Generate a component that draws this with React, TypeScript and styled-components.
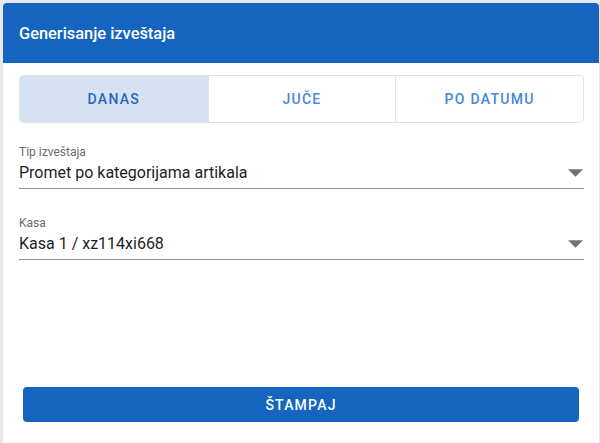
import React, { useState } from 'react'
import styled, { createGlobalStyle } from 'styled-components'

const GlobalStyle = createGlobalStyle`
  html, body {
    margin: 0;
    padding: 0;
    background: #e6e8ee;
    font-family: Roboto, 'Liberation Sans', sans-serif;
  }
  body {
    padding: 3px 1px 0 3px;
    overflow: hidden;
  }
`

const Card = styled.div`
  background: #fff;
  border-radius: 4px 4px 0 0;
  overflow: hidden;
  height: 460px;
  display: flex;
  flex-direction: column;
`

const Header = styled.div`
  background: #1565c0;
  height: 60px;
  display: flex;
  align-items: center;
  padding: 0 16px;
  color: #fff;
  font-size: 16.4px;
  font-weight: 500;
`

const Body = styled.div`
  padding: 12px 15px 0 16px;
  display: flex;
  flex-direction: column;
`

const Tabs = styled.div`
  display: grid;
  grid-template-columns: repeat(3, 1fr);
  border: 1px solid #e2e2e2;
  border-radius: 4px;
  overflow: hidden;
  height: 46px;
`

const Tab = styled.button<{ $active?: boolean }>`
  border: none;
  border-left: 1px solid #e2e2e2;
  &:first-child {
    border-left: none;
  }
  background: ${(p) => (p.$active ? '#d6e2f3' : '#fff')};
  color: ${(p) => (p.$active ? '#2a66bd' : '#4a87d4')};
  font-family: Roboto, 'Liberation Sans', sans-serif;
  font-size: 14px;
  font-weight: 500;
  letter-spacing: 1.3px;
  cursor: pointer;
  padding: 0;
`

const Field = styled.div<{ $top: number }>`
  margin-top: ${(p) => p.$top}px;
  display: flex;
  flex-direction: column;
`

const Label = styled.label`
  font-size: 12px;
  line-height: 14px;
  color: #6b6b6b;
`

const SelectRow = styled.div`
  display: flex;
  align-items: center;
  justify-content: space-between;
  height: 27px;
  border-bottom: 1px solid #8f8f8f;
  padding-bottom: 2px;
`

const Value = styled.span`
  font-size: 16px;
  color: #1e1e1e;
`

const Arrow = styled.svg`
  width: 15px;
  height: 8px;
  margin-right: 1px;
  fill: #737373;
`

const Footer = styled.div`
  padding: 0 20px;
  margin-top: 127px;
`

const PrintButton = styled.button`
  width: 100%;
  height: 35px;
  border: none;
  border-radius: 4px;
  background: #1565c0;
  color: #fff;
  font-family: Roboto, 'Liberation Sans', sans-serif;
  font-size: 14px;
  font-weight: 500;
  letter-spacing: 1.2px;
  cursor: pointer;
`

const SelectField = ({ label, value, top }: { label: string; value: string; top: number }) => (
  <Field $top={top}>
    <Label>{label}</Label>
    <SelectRow>
      <Value>{value}</Value>
      <Arrow viewBox="0 0 14 7">
        <path d="M0 0h14L7 7z" />
      </Arrow>
    </SelectRow>
  </Field>
)

export default function App() {
  const [tab, setTab] = useState(0)
  const tabs = ['DANAS', 'JUČE', 'PO DATUMU']

  return (
    <>
      <GlobalStyle />
      <Card>
        <Header>Generisanje izveštaja</Header>
        <Body>
          <Tabs>
            {tabs.map((t, i) => (
              <Tab key={t} $active={tab === i} onClick={() => setTab(i)}>
                {t}
              </Tab>
            ))}
          </Tabs>
          <SelectField label="Tip izveštaja" value="Promet po kategorijama artikala" top={22} />
          <SelectField label="Kasa" value="Kasa 1 / xz114xi668" top={27} />
        </Body>
        <Footer>
          <PrintButton>ŠTAMPAJ</PrintButton>
        </Footer>
      </Card>
    </>
  )
}
